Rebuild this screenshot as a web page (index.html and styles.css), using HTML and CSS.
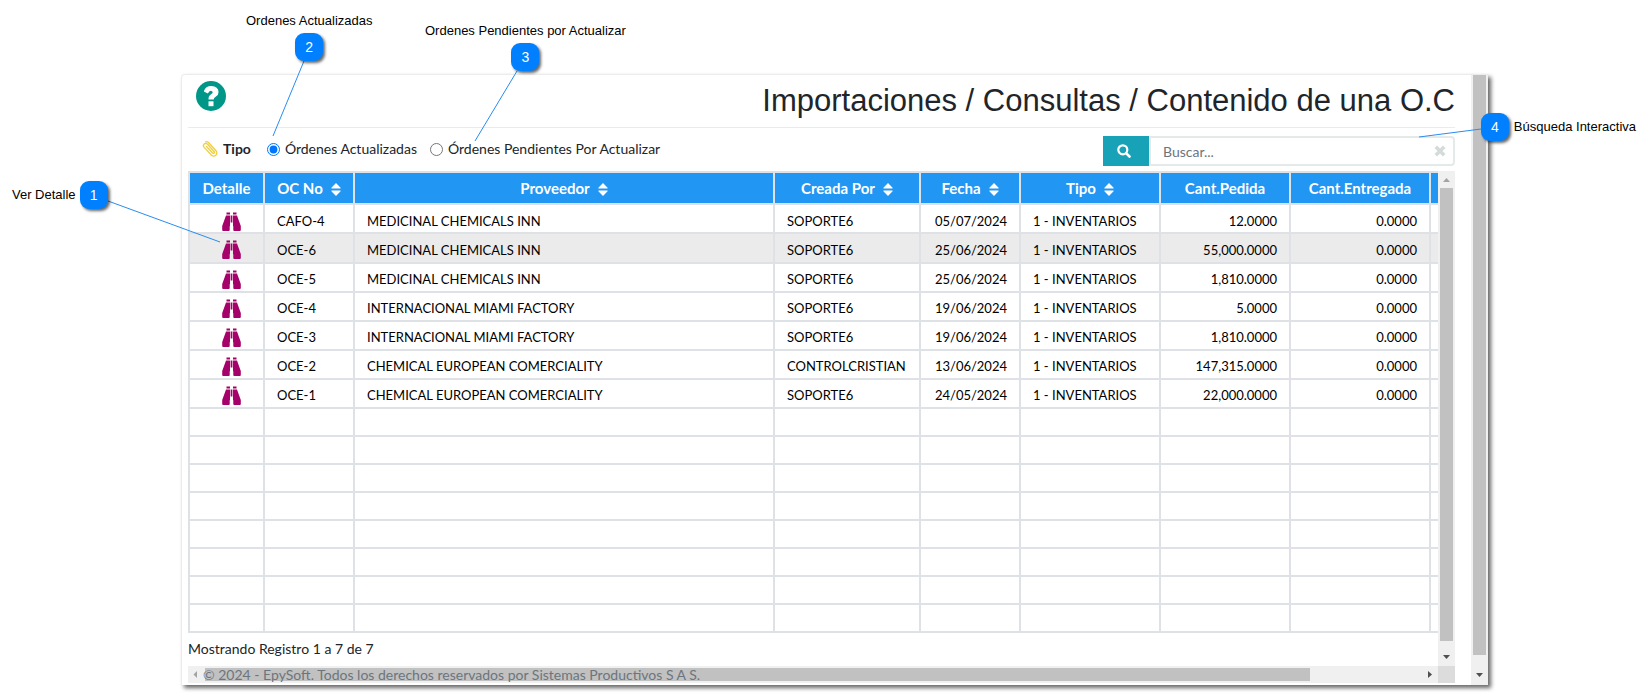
FILE: index.html
```
<!DOCTYPE html>
<html lang="es">
<head>
<meta charset="utf-8">
<title>Importaciones / Consultas / Contenido de una O.C</title>
<link rel="stylesheet" href="styles.css">
</head>
<body>
<svg class="sprite" aria-hidden="true">
  <symbol id="sort" viewBox="0 0 10 13"><path d="M5 0l4.600 4.800q.4.700-.4.700H.8q-.8 0-.4-.7zM5 13L.4 8.200Q0 7.500.8 7.500h8.400q.8 0 .4.700z"/></symbol>
  <symbol id="binoculars" viewBox="0 0 19 19"><path d="M4.500 0.500H8v2H4.500zM11 0.500h3.500v2H11zM4 3.500h4v10q0 .5-.3 1V18q0 1-1 1H1.200q-1 0-1-1v-4Q2 9 4 3.500zM15 3.500h-4v10q0 .5.300 1V18q0 1 1 1h5.500q1 0 1-1v-4Q17 9 15 3.500zM8.600 3.500h1.800v7H8.600z"/></symbol>
</svg>

<main class="panel">
  <div class="content">
    <header class="heading">
      <button class="help" type="button" aria-label="Ayuda">
        <svg viewBox="0 0 30 30"><circle cx="15" cy="15" r="15" fill="#009688"/><path d="M7.800 10.400Q9.500 5 15.300 5q7 .4 7.300 6 0 3-2.900 4.700-2 1.200-2 2.800h-5.200q-.2-3.700 2.600-5.300 1.700-1 1.600-2-.2-1.500-1.900-1.500-1.600.1-2.900 2.700z" fill="#fff"/><path d="M12.500 20.300h5v4.900h-5z" fill="#fff"/></svg>
      </button>
      <h1>Importaciones / Consultas / Contenido de una O.C</h1>
    </header>

    <form class="toolbar">
      <div class="filter" role="radiogroup" aria-labelledby="filter-name">
        <svg class="clip" viewBox="0 0 16 16" fill="none" stroke="#f0cf3c" stroke-width="1.300" stroke-linecap="round"><path d="M4.500 5.500l6.300 6.600q1.600.8 1.700-1L5.600 3.300Q3.800 1.700 2.200 3q-1.500 1.500-.2 3.200l7.500 8q2.500 1.700 4.300 0 1.900-1.900.4-4.200L6.700 1.800Q5.300.4 3.700.8"/></svg>
        <strong class="filter-name" id="filter-name">Tipo</strong>
        <label class="option"><input type="radio" name="tipo" checked>Órdenes Actualizadas</label>
        <label class="option"><input type="radio" name="tipo">Órdenes Pendientes Por Actualizar</label>
      </div>
      <div class="search">
        <button class="search-go" type="submit" aria-label="Buscar"><svg viewBox="0 0 14 14" fill="none" stroke="#fff"><circle cx="5.800" cy="5.800" r="4.500" stroke-width="2.200"/><path d="M9.300 9.300l3.200 3.200" stroke-width="2.600" stroke-linecap="round"/></svg></button>
        <input class="search-text" type="text" placeholder="Buscar..." aria-label="Buscar">
        <button class="search-clear" type="button" aria-label="Limpiar"><svg viewBox="0 0 10 10"><path d="M1.500 1.500l7 7M8.500 1.500l-7 7" stroke="#d5dbdb" stroke-width="3"/></svg></button>
      </div>
    </form>

    <section class="grid">
      <div class="grid-view">
        <table class="orders">
          <colgroup><col class="c-det"><col class="c-oc"><col><col class="c-by"><col class="c-date"><col class="c-type"><col class="c-ask"><col class="c-got"><col class="c-more"></colgroup>
          <thead><tr>
            <th>Detalle</th>
            <th>OC No<svg class="sort"><use href="#sort"/></svg></th>
            <th>Proveedor<svg class="sort"><use href="#sort"/></svg></th>
            <th>Creada Por<svg class="sort"><use href="#sort"/></svg></th>
            <th>Fecha<svg class="sort"><use href="#sort"/></svg></th>
            <th>Tipo<svg class="sort"><use href="#sort"/></svg></th>
            <th>Cant.Pedida</th>
            <th>Cant.Entregada</th>
            <th></th>
          </tr></thead>
          <tbody>
            <tr class="first"><td class="det"><button class="view" type="button" aria-label="Ver detalle"><svg><use href="#binoculars"/></svg></button></td><td>CAFO-4</td><td>MEDICINAL CHEMICALS INN</td><td>SOPORTE6</td><td class="num">05/07/2024</td><td>1 - INVENTARIOS</td><td class="num">12.0000</td><td class="num">0.0000</td><td></td></tr>
            <tr class="active"><td class="det"><button class="view" type="button" aria-label="Ver detalle"><svg><use href="#binoculars"/></svg></button></td><td>OCE-6</td><td>MEDICINAL CHEMICALS INN</td><td>SOPORTE6</td><td class="num">25/06/2024</td><td>1 - INVENTARIOS</td><td class="num">55,000.0000</td><td class="num">0.0000</td><td></td></tr>
            <tr><td class="det"><button class="view" type="button" aria-label="Ver detalle"><svg><use href="#binoculars"/></svg></button></td><td>OCE-5</td><td>MEDICINAL CHEMICALS INN</td><td>SOPORTE6</td><td class="num">25/06/2024</td><td>1 - INVENTARIOS</td><td class="num">1,810.0000</td><td class="num">0.0000</td><td></td></tr>
            <tr><td class="det"><button class="view" type="button" aria-label="Ver detalle"><svg><use href="#binoculars"/></svg></button></td><td>OCE-4</td><td>INTERNACIONAL MIAMI FACTORY</td><td>SOPORTE6</td><td class="num">19/06/2024</td><td>1 - INVENTARIOS</td><td class="num">5.0000</td><td class="num">0.0000</td><td></td></tr>
            <tr><td class="det"><button class="view" type="button" aria-label="Ver detalle"><svg><use href="#binoculars"/></svg></button></td><td>OCE-3</td><td>INTERNACIONAL MIAMI FACTORY</td><td>SOPORTE6</td><td class="num">19/06/2024</td><td>1 - INVENTARIOS</td><td class="num">1,810.0000</td><td class="num">0.0000</td><td></td></tr>
            <tr><td class="det"><button class="view" type="button" aria-label="Ver detalle"><svg><use href="#binoculars"/></svg></button></td><td>OCE-2</td><td>CHEMICAL EUROPEAN COMERCIALITY</td><td>CONTROLCRISTIAN</td><td class="num">13/06/2024</td><td>1 - INVENTARIOS</td><td class="num">147,315.0000</td><td class="num">0.0000</td><td></td></tr>
            <tr><td class="det"><button class="view" type="button" aria-label="Ver detalle"><svg><use href="#binoculars"/></svg></button></td><td>OCE-1</td><td>CHEMICAL EUROPEAN COMERCIALITY</td><td>SOPORTE6</td><td class="num">24/05/2024</td><td>1 - INVENTARIOS</td><td class="num">22,000.0000</td><td class="num">0.0000</td><td></td></tr>
            <tr class="empty"><td></td><td></td><td></td><td></td><td></td><td></td><td></td><td></td><td></td></tr>
            <tr class="empty"><td></td><td></td><td></td><td></td><td></td><td></td><td></td><td></td><td></td></tr>
            <tr class="empty"><td></td><td></td><td></td><td></td><td></td><td></td><td></td><td></td><td></td></tr>
            <tr class="empty"><td></td><td></td><td></td><td></td><td></td><td></td><td></td><td></td><td></td></tr>
            <tr class="empty"><td></td><td></td><td></td><td></td><td></td><td></td><td></td><td></td><td></td></tr>
            <tr class="empty"><td></td><td></td><td></td><td></td><td></td><td></td><td></td><td></td><td></td></tr>
            <tr class="empty"><td></td><td></td><td></td><td></td><td></td><td></td><td></td><td></td><td></td></tr>
            <tr class="empty"><td></td><td></td><td></td><td></td><td></td><td></td><td></td><td></td><td></td></tr>
          </tbody>
        </table>
        <p class="count">Mostrando Registro 1 a 7 de 7</p>
      </div>
      <div class="vbar" aria-hidden="true">
        <svg class="arrow" viewBox="0 0 17 17"><path d="M5 11l3.500-4L12 11z" fill="#a3a3a3"/></svg>
        <div class="thumb"></div>
        <svg class="arrow arrow-end" viewBox="0 0 17 17"><path d="M5 6l3.500 4L12 6z" fill="#505050"/></svg>
      </div>
      <div class="hbar" aria-hidden="true">
        <svg class="arrow" viewBox="0 0 17 17"><path d="M9 5L5.500 8.500 9 12z" fill="#a3a3a3"/></svg>
        <div class="thumb"></div>
        <svg class="arrow" viewBox="0 0 17 17"><path d="M7 5l4 3.500L7 12z" fill="#505050"/></svg>
      </div>
      <div class="corner"></div>
      <footer class="legal">© 2024 - EpySoft. Todos los derechos reservados por Sistemas Productivos S A S.</footer>
    </section>
  </div>
  <div class="vbar page-bar" aria-hidden="true">
    <div class="thumb"></div>
    <svg class="arrow arrow-end" viewBox="0 0 17 17"><path d="M5 6l3.500 4L12 6z" fill="#505050"/></svg>
  </div>
</main>

<svg class="leaders" aria-hidden="true"><path d="M108 201l112 41M304 61l-31 75M517 71l-42 70"/></svg>
<svg class="leaders leaders-right" aria-hidden="true"><path d="M81 129l-62 8"/></svg>
<div class="note note-1"><span>Ver Detalle</span><b class="pin">1</b></div>
<div class="note note-2"><span>Ordenes Actualizadas</span><b class="pin">2</b></div>
<div class="note note-3"><span>Ordenes Pendientes por Actualizar</span><b class="pin">3</b></div>
<div class="note note-4"><b class="pin">4</b><span>Búsqueda Interactiva</span></div>
</body>
</html>
```

FILE: styles.css
```
* { box-sizing: border-box; }
body {
  position: relative;
  margin: 0;
  padding: 74px 162px 9px 181px;
  background: #fff;
  color: #212529;
  font: 14px/20px Lato, "Liberation Sans", sans-serif;
}
button { padding: 0; border: 0; background: none; cursor: pointer; }
svg { display: block; }
.sprite { position: absolute; width: 0; height: 0; }

.panel {
  display: flex;
  border: 1px solid #ececec;
  border-width: 1px 0 0 1px;
  border-radius: 4px 0 0 0;
  background: #fff;
  box-shadow: 3px 3px 4px rgba(0, 0, 0, .6);
}
.content { flex: 1; min-width: 0; padding: 0 16px 2px 6px; }

.heading {
  display: flex;
  justify-content: space-between;
  align-items: flex-start;
  height: 53px;
  padding: 6px 0 0 8px;
  border-bottom: 1px solid #ebebeb;
}
.help, .help svg { width: 30px; height: 30px; }
h1 { margin: 0; font: 400 31px/40px "Liberation Sans", Arial, sans-serif; }

.toolbar { display: flex; justify-content: space-between; padding: 8px 0 5px; }
.filter { display: flex; align-items: center; height: 26px; padding-left: 14px; }
.clip { width: 16px; height: 16px; }
.filter-name { margin: 0 16px 0 5px; }
.option { display: flex; align-items: center; gap: 5px; margin-right: 13px; }
.option input { width: 13px; height: 13px; margin: 0; accent-color: #0075ff; }

.search { position: relative; display: flex; width: 352px; height: 30px; }
.search-go { display: grid; place-items: center; width: 46px; padding-right: 4px; background: #17a2b8; }
.search-go svg { width: 14px; height: 14px; }
.search-text {
  flex: 1;
  min-width: 0;
  padding: 2px 30px 0 12px;
  border: 2px solid #e4e9e9;
  border-radius: 0 4px 4px 0;
  font: inherit;
}
.search-text::placeholder { color: #6c757d; opacity: 1; }
.search-clear { position: absolute; top: 9px; right: 9px; }
.search-clear svg { width: 12px; height: 12px; }

.grid {
  position: relative;
  display: grid;
  grid-template: 1fr 17px / minmax(0, 1fr) 17px;
}
.grid-view { overflow: hidden; padding-bottom: 7px; }
.orders {
  width: 100%;
  border-collapse: collapse;
  table-layout: fixed;
  color: #000;
  font-size: 13px;
  line-height: 20px;
}
.c-det { width: 75px; }
.c-oc { width: 90px; }
.c-by { width: 146px; }
.c-date { width: 100px; }
.c-type { width: 140px; }
.c-ask { width: 130px; }
.c-got { width: 140px; }
.c-more { width: 8px; }
th, td { height: 29px; padding: 3px 12px 0; border: 2px solid #dee2e6; white-space: nowrap; text-align: left; }
th { height: 32px; padding: 0 4px; background: #2196f3; color: #fff; font-size: 15px; text-align: center; }
th:last-child, td:last-child { padding: 0; border-right: 0; }
.active td { height: 30px; background: #ebebeb; }
.empty td { height: 28px; }
.num { text-align: right; }
.det { padding: 3px 0 0 10px; text-align: center; }
.first td { padding-top: 5px; }
.view { display: block; width: 19px; height: 19px; margin: 0 auto; }
.view svg { width: 19px; height: 19px; fill: #a6006b; }
.sort { display: inline-block; width: 10px; height: 13px; margin-left: 8px; vertical-align: -2px; fill: #fff; }
.count { margin: 6px 0 0; }

.vbar { display: flex; flex-direction: column; width: 17px; background: #f0f0f0; }
.vbar .thumb { flex: 1; margin: 0 2px; background: #c1c1c1; }
.hbar { display: flex; background: #f0f0f0; }
.hbar .thumb { flex: 1; margin: 2px 111px 2px 0; background: #c1c1c1; }
.arrow { flex: none; width: 17px; height: 17px; }
.vbar .arrow-end { margin-top: 8px; }
.page-bar .arrow-end { margin: 12px 0 1px; }
.corner { background: #dcdcdc; }
.legal { position: absolute; bottom: -2px; left: 15px; color: #6c757d; }

.leaders { position: absolute; top: 0; left: 0; width: 640px; height: 260px; fill: none; stroke: #2a8cf0; pointer-events: none; }
.leaders-right { right: 69px; left: auto; width: 181px; }
.note {
  position: absolute;
  display: flex;
  align-items: center;
  color: #000;
  font: 13px/16px "Liberation Sans", Arial, sans-serif;
  white-space: nowrap;
}
.pin {
  flex: none;
  width: 28px;
  height: 28px;
  border-radius: 9px;
  background: #0080ff;
  box-shadow: 2px 2px 3px rgba(0, 0, 0, .6);
  color: #fff;
  font: 14px/28px "Liberation Sans", Arial, sans-serif;
  text-align: center;
}
.note-1 { top: 181px; left: 12px; gap: 4px; }
.note-2 { top: 13px; left: 246px; flex-direction: column; gap: 4px; }
.note-3 { top: 23px; left: 425px; flex-direction: column; gap: 4px; }
.note-4 { top: 113px; right: 14px; gap: 5px; }
```
